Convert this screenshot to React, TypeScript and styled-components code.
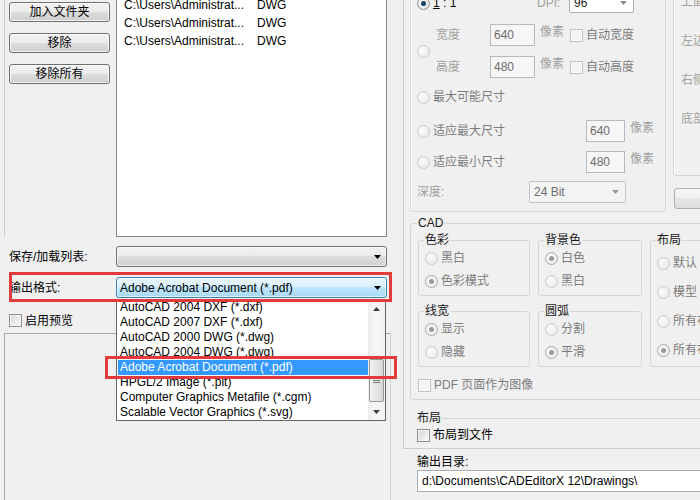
import styled, { createGlobalStyle } from "styled-components";

const FONT = `"Liberation Sans", "Noto Sans CJK SC", sans-serif`;
const RED = "#e23b3b";
const DIM = "#a0a0a0";
const MUTED = "#7c7c7c";
const GROUP_LINE = "#d5d5d5";
const BTN_BG = "linear-gradient(#f2f2f2 0%, #ebebeb 49%, #dddddd 50%, #cfcfcf 100%)";

const FILES = [
  "C:\\Users\\Administrat...",
  "C:\\Users\\Administrat...",
  "C:\\Users\\Administrat...",
];

const FORMATS = [
  "AutoCAD 2004 DXF (*.dxf)",
  "AutoCAD 2007 DXF (*.dxf)",
  "AutoCAD 2000 DWG (*.dwg)",
  "AutoCAD 2004 DWG (*.dwg)",
  "Adobe Acrobat Document (*.pdf)",
  "HPGL/2 Image (*.plt)",
  "Computer Graphics Metafile (*.cgm)",
  "Scalable Vector Graphics (*.svg)",
];
const SELECTED = 4;

const GlobalStyle = createGlobalStyle`
  * { box-sizing: border-box; }
  body {
    margin: 0;
    background: #f0f0f0;
    font-family: ${FONT};
    font-size: 12px;
    line-height: 16px;
    color: #000;
  }
`;

function Arrow({ color = "#000", up = false }: { color?: string; up?: boolean }) {
  return (
    <svg width="7" height="4" viewBox="0 0 7 4">
      <polygon points={up ? "0,4 7,4 3.5,0" : "0,0 7,0 3.5,4"} fill={color} />
    </svg>
  );
}

function Grip() {
  return (
    <svg width="7" height="5" viewBox="0 0 7 5">
      <path d="M0 0.5H7M0 2.5H7M0 4.5H7" stroke="#7a7a7a" strokeWidth="1" />
    </svg>
  );
}

export default function App() {
  return (
    <>
      <GlobalStyle />
      <Window>
        <LeftCol>
          <TopArea>
            <ButtonStack>
              <PushButton>加入文件夹</PushButton>
              <PushButton>移除</PushButton>
              <PushButton>移除所有</PushButton>
            </ButtonStack>
            <FileList>
              <FileRows>
                {FILES.map((f, i) => (
                  <FileRow key={i}>
                    <PathCell>{f}</PathCell>
                    <span>DWG</span>
                  </FileRow>
                ))}
              </FileRows>
            </FileList>
          </TopArea>

          <FieldRow $top={9}>
            <FieldLabel>保存/加载列表:</FieldLabel>
            <Combo>
              <ComboText />
              <Arrow />
            </Combo>
          </FieldRow>

          <FieldRow $top={10}>
            <FieldLabel>输出格式:</FieldLabel>
            <Combo $focused>
              <ComboText>Adobe Acrobat Document (*.pdf)</ComboText>
              <Arrow />
              <Dropdown>
                <ItemList>
                  {FORMATS.map((f, i) => (
                    <Item key={f} $active={i === SELECTED}>
                      {f}
                    </Item>
                  ))}
                </ItemList>
                <ScrollBar>
                  <ScrollBtn>
                    <Arrow up color="#3a3a3a" />
                  </ScrollBtn>
                  <Track>
                    <Thumb>
                      <Grip />
                    </Thumb>
                  </Track>
                  <ScrollBtn>
                    <Arrow color="#3a3a3a" />
                  </ScrollBtn>
                </ScrollBar>
                <RedFrame $left={-12} $top={56} $w={292} $h={23} />
              </Dropdown>
            </Combo>
            <RedFrame $left={9} $top={-5} $w={383} $h={30} />
          </FieldRow>

          <CheckRow>
            <Check />
            <span>启用预览</span>
          </CheckRow>
          <PreviewPanel />
        </LeftCol>

        <RightCol>
          <Panel>
            <TopRow>
              <ImageGroup>
                <Row $h={20}>
                  <Cell $w={120}>
                    <Radio $checked />
                    <span>
                      <u>1</u> : 1
                    </span>
                  </Cell>
                  <Cell $w={32}>
                    <Text $c={DIM}>DPI:</Text>
                  </Cell>
                  <SmallCombo $w={65} $h={20} $white>
                    <span>96</span>
                    <Arrow color="#8a8a8a" />
                  </SmallCombo>
                </Row>

                <SizeBlock>
                  <Cell $w={19}>
                    <Radio $disabled />
                  </Cell>
                  <SizeRows>
                    <Row $h={22}>
                      <Cell $w={54}>
                        <Text $c={DIM}>宽度</Text>
                      </Cell>
                      <NumBox $w={45}>640</NumBox>
                      <Unit>像素</Unit>
                      <Check $disabled />
                      <Text $c={MUTED} $ml={3}>
                        自动宽度
                      </Text>
                    </Row>
                    <Row $h={22}>
                      <Cell $w={54}>
                        <Text $c={DIM}>高度</Text>
                      </Cell>
                      <NumBox $w={45}>480</NumBox>
                      <Unit>像素</Unit>
                      <Check $disabled />
                      <Text $c={MUTED} $ml={3}>
                        自动高度
                      </Text>
                    </Row>
                  </SizeRows>
                </SizeBlock>

                <Row $h={16} $mt={11}>
                  <Cell $w={200}>
                    <Radio $disabled />
                    <Text $c={MUTED}>最大可能尺寸</Text>
                  </Cell>
                </Row>
                <Row $h={22} $mt={15}>
                  <Cell $w={169}>
                    <Radio $disabled />
                    <Text $c={MUTED}>适应最大尺寸</Text>
                  </Cell>
                  <NumBox $w={39}>640</NumBox>
                  <Unit>像素</Unit>
                </Row>
                <Row $h={22} $mt={9}>
                  <Cell $w={169}>
                    <Radio $disabled />
                    <Text $c={MUTED}>适应最小尺寸</Text>
                  </Cell>
                  <NumBox $w={39}>480</NumBox>
                  <Unit>像素</Unit>
                </Row>
                <Row $h={22} $mt={8}>
                  <Cell $w={112}>
                    <Text $c={DIM}>深度:</Text>
                  </Cell>
                  <SmallCombo $w={97} $h={22}>
                    <span>24 Bit</span>
                    <Arrow color="#9a9a9a" />
                  </SmallCombo>
                </Row>
              </ImageGroup>

              <SideCol>
                <MarginGroup>
                  <Text $c={DIM}>上面</Text>
                  <Text $c={DIM}>左边</Text>
                  <Text $c={DIM}>右侧</Text>
                  <Text $c={DIM}>底部</Text>
                </MarginGroup>
                <SideButton />
              </SideCol>
            </TopRow>

            <CadGroup>
              <Legend>CAD</Legend>
              <CadGrid>
                <SubGroup>
                  <Legend>色彩</Legend>
                  <OptionRow>
                    <Radio $disabled />
                    <span>黑白</span>
                  </OptionRow>
                  <OptionRow>
                    <Radio $disabled $checked />
                    <span>色彩模式</span>
                  </OptionRow>
                </SubGroup>
                <SubGroup>
                  <Legend>背景色</Legend>
                  <OptionRow>
                    <Radio $disabled $checked />
                    <span>白色</span>
                  </OptionRow>
                  <OptionRow>
                    <Radio $disabled />
                    <span>黑白</span>
                  </OptionRow>
                </SubGroup>
                <SubGroup $span $pt={6} $gap={11}>
                  <Legend>布局</Legend>
                  <OptionRow>
                    <Radio $disabled />
                    <span>默认</span>
                  </OptionRow>
                  <OptionRow>
                    <Radio $disabled />
                    <span>模型</span>
                  </OptionRow>
                  <OptionRow>
                    <Radio $disabled />
                    <span>所有布局</span>
                  </OptionRow>
                  <OptionRow>
                    <Radio $disabled $checked />
                    <span>所有布局</span>
                  </OptionRow>
                </SubGroup>
                <SubGroup>
                  <Legend>线宽</Legend>
                  <OptionRow>
                    <Radio $disabled $checked />
                    <span>显示</span>
                  </OptionRow>
                  <OptionRow>
                    <Radio $disabled />
                    <span>隐藏</span>
                  </OptionRow>
                </SubGroup>
                <SubGroup>
                  <Legend>圆弧</Legend>
                  <OptionRow>
                    <Radio $disabled />
                    <span>分割</span>
                  </OptionRow>
                  <OptionRow>
                    <Radio $disabled $checked />
                    <span>平滑</span>
                  </OptionRow>
                </SubGroup>
              </CadGrid>
              <PdfRow>
                <Check $disabled />
                <span>PDF 页面作为图像</span>
              </PdfRow>
            </CadGroup>

            <LayoutSection>
              <Legend>布局</Legend>
              <CheckLine>
                <Check />
                <span>布局到文件</span>
              </CheckLine>
            </LayoutSection>
          </Panel>

          <OutputLabel>输出目录:</OutputLabel>
          <OutputInput>d:\Documents\CADEditorX 12\Drawings\</OutputInput>
        </RightCol>
      </Window>
    </>
  );
}

const Window = styled.div`
  width: 700px;
  height: 500px;
  overflow: hidden;
  display: flex;
  background: #f0f0f0;
`;

/* ---------- left side ---------- */

const LeftCol = styled.div`
  width: 400px;
  flex: none;
  display: flex;
  flex-direction: column;
`;

const TopArea = styled.div`
  height: 237px;
  flex: none;
  margin-left: 4px;
  padding-left: 4px;
  border-left: 1px solid #cdcdcd;
  display: flex;
  gap: 6px;
`;

const ButtonStack = styled.div`
  display: flex;
  flex-direction: column;
  gap: 11px;
  padding-top: 2px;
`;

const PushButton = styled.button`
  width: 101px;
  height: 20px;
  padding: 0;
  font: inherit;
  line-height: 16px;
  color: #000;
  border: 1px solid #707070;
  border-radius: 3px;
  background: ${BTN_BG};
  box-shadow: inset 0 0 0 1px rgba(255, 255, 255, 0.75);
`;

const FileList = styled.div`
  width: 271px;
  height: 100%;
  background: #fff;
  border: 1px solid #828790;
  border-top: none;
  padding-left: 7px;
  overflow: hidden;
`;

const FileRows = styled.div`
  margin-top: -4px;
`;

const FileRow = styled.div`
  display: flex;
  height: 18px;
  line-height: 18px;
  white-space: nowrap;
`;

const PathCell = styled.span`
  width: 133px;
  flex: none;
`;

const FieldRow = styled.div<{ $top: number }>`
  position: relative;
  display: flex;
  align-items: center;
  height: 21px;
  flex: none;
  margin-top: ${(p) => p.$top}px;
  padding-left: 9px;
`;

const FieldLabel = styled.span`
  width: 107px;
  flex: none;
`;

const Combo = styled.div<{ $focused?: boolean }>`
  position: relative;
  width: 271px;
  height: 21px;
  display: flex;
  align-items: center;
  padding: 0 5px 0 3px;
  border: 1px solid ${(p) => (p.$focused ? "#3c7fb1" : "#707070")};
  border-radius: 3px;
  background: ${(p) =>
    p.$focused
      ? "linear-gradient(#eaf6fd 0%, #d9f0fc 49%, #bee6fd 50%, #a7d9f5 100%)"
      : BTN_BG};
  box-shadow: inset 0 0 0 1px rgba(255, 255, 255, 0.6);
`;

const ComboText = styled.span`
  flex: 1;
  white-space: nowrap;
`;

const Dropdown = styled.div`
  position: absolute;
  top: 21px;
  left: -1px;
  width: 270px;
  height: 122px;
  z-index: 2;
  display: flex;
  background: #fff;
  border: 1px solid #646464;
`;

const ItemList = styled.div`
  flex: 1;
  min-width: 0;
`;

const Item = styled.div<{ $active?: boolean }>`
  height: 15px;
  line-height: 15px;
  margin-left: 1px;
  padding-left: 2px;
  white-space: nowrap;
  background: ${(p) => (p.$active ? "#3399ff" : "transparent")};
  color: ${(p) => (p.$active ? "#fff" : "#000")};
`;

const ScrollBar = styled.div`
  width: 17px;
  flex: none;
  display: flex;
  flex-direction: column;
  background: linear-gradient(90deg, #ececec, #f6f6f6 40%, #f1f1f1);
`;

const ScrollBtn = styled.div`
  height: 17px;
  flex: none;
  display: flex;
  align-items: center;
  justify-content: center;
`;

const Track = styled.div`
  flex: 1;
  display: flex;
  flex-direction: column;
  justify-content: flex-end;
  padding: 0 1px 1px;
`;

const Thumb = styled.div`
  height: 43px;
  display: flex;
  align-items: center;
  justify-content: center;
  border: 1px solid #979797;
  border-radius: 2px;
  background: linear-gradient(90deg, #f3f3f3, #e4e4e4 50%, #d6d6d6);
`;

const RedFrame = styled.div<{ $left: number; $top: number; $w: number; $h: number }>`
  position: absolute;
  left: ${(p) => p.$left}px;
  top: ${(p) => p.$top}px;
  width: ${(p) => p.$w}px;
  height: ${(p) => p.$h}px;
  border: 3px solid ${RED};
  z-index: 3;
  pointer-events: none;
`;

const CheckRow = styled.label`
  display: flex;
  align-items: center;
  gap: 3px;
  height: 13px;
  flex: none;
  margin: 16px 0 0 9px;
`;

const Check = styled.span<{ $disabled?: boolean }>`
  width: 13px;
  height: 13px;
  flex: none;
  border: 1px solid ${(p) => (p.$disabled ? "#c2c2c2" : "#8e8f8f")};
  background: ${(p) =>
    p.$disabled ? "#f4f4f4" : "linear-gradient(135deg, #d6d6d6, #f9f9f9)"};
  box-shadow: inset 0 0 0 1px ${(p) => (p.$disabled ? "#fafafa" : "#f4f4f4")};
`;

const PreviewPanel = styled.div`
  flex: 1;
  width: 387px;
  margin: 6px 0 0 4px;
  border: 1px solid #a9a9a9;
  border-right-color: #d4d4d4;
  border-bottom: none;
`;

/* ---------- right side ---------- */

const RightCol = styled.div`
  width: 300px;
  flex: none;
  padding-left: 3px;
  display: flex;
  flex-direction: column;
`;

const Panel = styled.div`
  width: 420px;
  margin-top: -16px;
  padding: 0 0 5px 6px;
  border-left: 1px solid #cdcdcd;
  border-bottom: 1px solid #cdcdcd;
`;

const TopRow = styled.div`
  display: flex;
  align-items: flex-start;
  gap: 7px;
`;

const ImageGroup = styled.div`
  width: 256px;
  flex: none;
  padding: 8px 0 8px 6px;
  display: flex;
  flex-direction: column;
  border: 1px solid ${GROUP_LINE};
  border-radius: 3px;
  box-shadow: inset 1px 1px 0 #fff;
`;

const Row = styled.div<{ $h: number; $mt?: number }>`
  display: flex;
  align-items: center;
  height: ${(p) => p.$h}px;
  margin-top: ${(p) => p.$mt ?? 0}px;
  white-space: nowrap;
`;

const Cell = styled.div<{ $w: number }>`
  width: ${(p) => p.$w}px;
  flex: none;
  display: flex;
  align-items: center;
  gap: 3px;
`;

const Text = styled.span<{ $c?: string; $ml?: number }>`
  color: ${(p) => p.$c ?? "#000"};
  margin-left: ${(p) => p.$ml ?? 0}px;
  white-space: nowrap;
`;

const SizeBlock = styled.div`
  display: flex;
  align-items: center;
  margin-top: 11px;
`;

const SizeRows = styled.div`
  display: flex;
  flex-direction: column;
  gap: 10px;
`;

const NumBox = styled.div<{ $w: number }>`
  width: ${(p) => p.$w}px;
  height: 22px;
  flex: none;
  display: flex;
  align-items: center;
  padding-left: 3px;
  color: #6d6d6d;
  background: #f6f6f6;
  border: 1px solid #b9b9b9;
`;

const Unit = styled.span`
  width: 30px;
  flex: none;
  margin: 0 0 6px 5px;
  color: ${DIM};
`;

const SmallCombo = styled.div<{ $w: number; $h: number; $white?: boolean }>`
  width: ${(p) => p.$w}px;
  height: ${(p) => p.$h}px;
  flex: none;
  display: flex;
  align-items: center;
  justify-content: space-between;
  padding: 0 6px 0 4px;
  color: ${(p) => (p.$white ? "#222" : "#6d6d6d")};
  background: ${(p) => (p.$white ? "#fff" : "#f4f4f4")};
  border: 1px solid ${(p) => (p.$white ? "#abadb3" : "#c5c5c5")};
  border-radius: 2px;
`;

const Radio = styled.span<{ $checked?: boolean; $disabled?: boolean }>`
  width: 13px;
  height: 13px;
  flex: none;
  display: flex;
  align-items: center;
  justify-content: center;
  border-radius: 50%;
  border: 1px solid
    ${(p) => (p.$disabled ? (p.$checked ? "#a9a9a9" : "#cacaca") : "#8e8f8f")};
  background: ${(p) =>
    p.$disabled
      ? "radial-gradient(circle at 40% 40%, #fbfbfb, #e6e6e6)"
      : "radial-gradient(circle at 40% 40%, #ffffff, #d8d8d8)"};

  &::after {
    content: "";
    display: ${(p) => (p.$checked ? "block" : "none")};
    width: 5px;
    height: 5px;
    border-radius: 50%;
    background: ${(p) => (p.$disabled ? "#9c9c9c" : "#1e3f66")};
  }
`;

const SideCol = styled.div`
  display: flex;
  flex-direction: column;
  gap: 12px;
`;

const MarginGroup = styled.div`
  width: 130px;
  height: 192px;
  padding: 9px 0 0 7px;
  display: flex;
  flex-direction: column;
  gap: 23px;
  border: 1px solid ${GROUP_LINE};
  border-radius: 3px;
  box-shadow: inset 1px 1px 0 #fff;
`;

const SideButton = styled.div`
  width: 80px;
  height: 21px;
  margin-left: 1px;
  border: 1px solid #adadad;
  border-radius: 3px;
  background: linear-gradient(#f6f6f6 0%, #f0f0f0 49%, #e6e6e6 50%, #dcdcdc 100%);
`;

const Legend = styled.legend`
  padding: 0 1px;
  margin-left: -1px;
  line-height: 16px;
  color: #1a1a1a;
`;

const CadGroup = styled.fieldset`
  width: 330px;
  min-width: 0;
  margin: 3px 0 0;
  padding: 1px 0 6px 7px;
  border: 1px solid ${GROUP_LINE};
  border-radius: 3px;
`;

const CadGrid = styled.div`
  display: grid;
  grid-template-columns: 112px 104px 120px;
  grid-template-rows: auto auto;
  column-gap: 8px;
  row-gap: 7px;
`;

const SubGroup = styled.fieldset<{ $span?: boolean; $pt?: number; $gap?: number }>`
  min-width: 0;
  margin: 0;
  padding: ${(p) => p.$pt ?? 1}px 0 5px 6px;
  display: flex;
  flex-direction: column;
  gap: ${(p) => p.$gap ?? 5}px;
  border: 1px solid ${GROUP_LINE};
  border-radius: 3px;
  ${(p) => (p.$span ? "grid-row: 1 / span 2; grid-column: 3;" : "")}
`;

const OptionRow = styled.div`
  height: 18px;
  display: flex;
  align-items: center;
  gap: 3px;
  color: ${MUTED};
  white-space: nowrap;
`;

const PdfRow = styled.div`
  height: 16px;
  margin-top: 10px;
  display: flex;
  align-items: center;
  gap: 3px;
  color: ${MUTED};
`;

const LayoutSection = styled.fieldset`
  min-width: 0;
  margin: 10px 0 0 7px;
  padding: 1px 0 0;
  border: none;
  border-top: 1px solid ${GROUP_LINE};
`;

const CheckLine = styled.div`
  height: 16px;
  display: flex;
  align-items: center;
  gap: 3px;
`;

const OutputLabel = styled.div`
  margin: 5px 0 0 14px;
  line-height: 16px;
`;

const OutputInput = styled.div`
  width: 300px;
  height: 22px;
  margin-left: 14px;
  padding-left: 4px;
  display: flex;
  align-items: center;
  white-space: nowrap;
  background: #fff;
  border: 1px solid #abadb3;
  border-right: none;
`;
